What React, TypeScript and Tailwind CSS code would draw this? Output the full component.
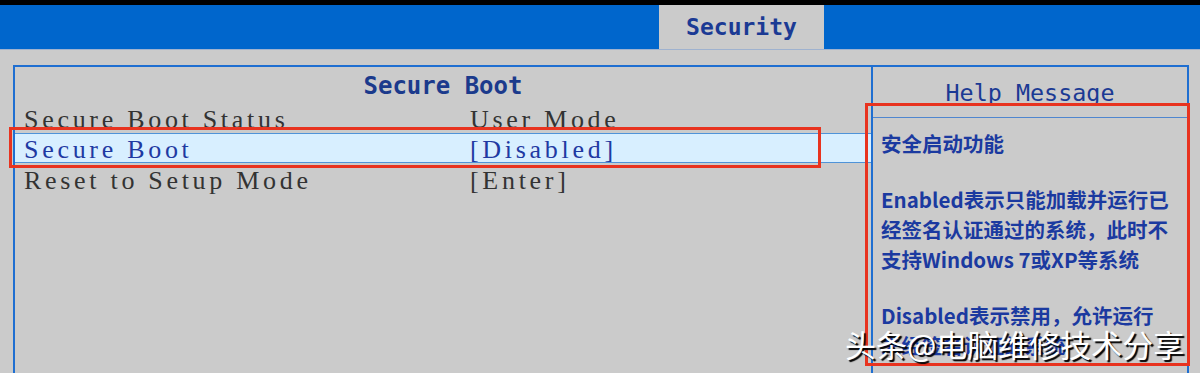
import React from 'react'

const rows = [
  { label: 'Secure Boot Status', value: 'User Mode' },
  { label: 'Secure Boot', value: '[Disabled]', selected: true },
  { label: 'Reset to Setup Mode', value: '[Enter]' },
]

export default function App() {
  return (
    <div className="relative w-[1200px] h-[373px] overflow-hidden bg-[#cbcbcb] flex flex-col">
      {/* top bar */}
      <div className="h-[5px] bg-black shrink-0" />
      <div className="h-[44px] bg-[#0066cc] flex shrink-0">
        <div className="ml-[659px] w-[165px] bg-[#cbcbcb] flex items-center justify-center font-['DejaVu_Sans_Mono',monospace] font-bold text-[23px] text-[#1b3a94]">
          Security
        </div>
      </div>
      <div className="h-px bg-[#9fb2cf] shrink-0" />

      {/* panels */}
      <div className="mt-[15px] ml-[13px] w-[1176px] flex-1 flex border-t-2 border-x-2 border-[#1f6fd1]">
        {/* left panel */}
        <div className="w-[856px] flex flex-col">
          <div className="h-[33px] pt-[4px] flex items-center justify-center font-['DejaVu_Sans_Mono',monospace] font-bold text-[24px] text-[#1b3a8c]">
            Secure Boot
          </div>
          {rows.map((r, i) => (
            <div
              key={r.label}
              className={
                r.selected
                  ? 'h-[30px] pt-[2px] flex items-center pl-[9px] bg-[#d8efff] border-y border-[#4f93d8] text-[#1f3aa2]'
                  : i === 0
                  ? 'h-[33px] pt-[5px] flex items-center pl-[9px] text-[#333333]'
                  : 'h-[32px] pt-[3px] flex items-center pl-[9px] text-[#333333]'
              }
            >
              <span className="w-[446px] font-['Liberation_Serif',serif] text-[26px] tracking-[3.7px] whitespace-pre">{r.label}</span>
              <span className="font-['Liberation_Serif',serif] text-[26px] tracking-[3.7px] whitespace-pre">{r.value}</span>
            </div>
          ))}
        </div>

        {/* right panel */}
        <div className="flex-1 border-l-2 border-[#1f6fd1] flex flex-col">
          <div className="h-[51px] pt-[4px] flex items-center justify-center border-b border-[#4f86cf] font-['DejaVu_Sans_Mono',monospace] text-[23.4px] text-[#1b3a94]">
            Help Message
          </div>
          <div className="pl-[8px] pt-[10px] font-['Noto_Sans_CJK_SC',sans-serif] font-bold text-[20.5px] leading-[30px] text-[#1b3aa0] whitespace-nowrap">
            <p>安全启动功能</p>
            <p className="mt-[26px]">
              Enabled表示只能加载并运行已
              <br />
              经签名认证通过的系统，此时不
              <br />
              支持Windows 7或XP等系统
            </p>
            <p className="mt-[26px]">
              Disabled表示禁用，允许运行
              <br />
              未经签名认证的系统
            </p>
          </div>
        </div>
      </div>

      {/* annotation boxes */}
      <div className="absolute left-[9px] top-[127px] w-[812px] h-[41px] border-[3px] border-[#e8331f]" />
      <div className="absolute left-[865px] top-[103px] w-[325px] h-[263px] border-[3px] border-[#e8331f]" />

      {/* watermark */}
      <div className="absolute left-[845px] top-[325px] font-['Noto_Sans_CJK_SC',sans-serif] text-[31px] leading-[38px] text-white whitespace-nowrap [text-shadow:2px_2px_1px_#000]">
        头条@电脑维修技术分享
      </div>
    </div>
  )
}
